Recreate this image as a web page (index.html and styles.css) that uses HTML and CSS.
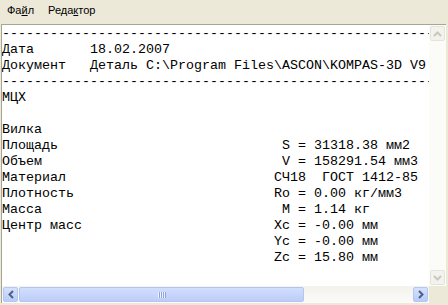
FILE: index.html
```
<!DOCTYPE html>
<html lang="ru">
<head>
  <meta charset="UTF-8">
  <title>МЦХ</title>
  <link rel="stylesheet" href="styles.css">
</head>
<body>

  <div class="menubar">
    <span class="menu-item">Фа<u>й</u>л</span>
    <span class="menu-item">Реда<u>к</u>тор</span>
  </div>

  <div class="window">
    <div class="view">
      <div class="text-area">
<pre class="report">--------------------------------------------------------------------------------
Дата       18.02.2007
Документ   Деталь C:\Program Files\ASCON\KOMPAS-3D V9
--------------------------------------------------------------------------------
МЦХ

Вилка
Площадь                            S = 31318.38 мм2
Объем                              V = 158291.54 мм3
Материал                          СЧ18  ГОСТ 1412-85
Плотность                         Ro = 0.00 кг/мм3
Масса                              M = 1.14 кг
Центр масс                        Xc = -0.00 мм
                                  Yc = -0.00 мм
                                  Zc = 15.80 мм</pre>
      </div>
      <div class="vscroll">
        <div class="sb-btn disabled">
          <svg width="9" height="6"><polyline points="1,5 4.5,1.5 8,5" fill="none" stroke="#c9c8bd" stroke-width="2"/></svg>
        </div>
        <div class="sb-track"></div>
        <div class="sb-btn disabled">
          <svg width="9" height="6"><polyline points="1,1 4.5,4.5 8,1" fill="none" stroke="#c9c8bd" stroke-width="2"/></svg>
        </div>
      </div>
    </div>
    <div class="hscroll-row">
      <div class="hscroll">
        <div class="sb-btn">
          <svg width="6" height="9"><polyline points="5,1 1.5,4.5 5,8" fill="none" stroke="#4d6185" stroke-width="2"/></svg>
        </div>
        <div class="sb-track">
          <div class="thumb"><span class="grip"></span></div>
        </div>
        <div class="sb-btn">
          <svg width="6" height="9"><polyline points="1,1 4.5,4.5 1,8" fill="none" stroke="#4d6185" stroke-width="2"/></svg>
        </div>
      </div>
      <div class="corner"></div>
    </div>
  </div>

</body>
</html>
```

FILE: styles.css
```
body {
  margin: 0;
  width: 448px;
  height: 305px;
  overflow: hidden;
  background-color: #ece9d8;
  font-family: "Liberation Sans", Arial, sans-serif;
  font-size: 11px;
  color: #000;
}

.menubar {
  display: flex;
  align-items: center;
  height: 24px;
}

.menu-item {
  padding: 0 7px;
  line-height: 17px;
  margin-top: -3px;
}

.window {
  margin-left: 1px;
  width: 444px;
  height: 278px;
  border-left: 1px solid #a7a596;
  border-top: 1px solid #a7a596;
  display: flex;
  flex-direction: column;
}

.view {
  display: flex;
  height: 261px;
  background: #fff;
}

.text-area {
  width: 427px;
  overflow: hidden;
}

.report {
  margin: 0;
  padding-top: 1px;
  font-family: "Liberation Mono", "Courier New", monospace;
  font-size: 13.333px;
  line-height: 16px;
  white-space: pre;
}

.vscroll {
  width: 17px;
  display: flex;
  flex-direction: column;
  background: #fbfbf8;
}

.vscroll .sb-track {
  flex: 1;
}

.sb-btn {
  width: 13px;
  height: 13px;
  margin: 1px;
  border: 1px solid #b4c6f4;
  border-radius: 2px;
  background: linear-gradient(to bottom, #d5e1fe, #b8cbf9);
  display: flex;
  align-items: center;
  justify-content: center;
}

.sb-btn.disabled {
  border-color: #e5e4dc;
  background: #f3f2ec;
}

.hscroll-row {
  display: flex;
  height: 17px;
}

.hscroll {
  width: 427px;
  display: flex;
  background: linear-gradient(to bottom, #f3f2ed, #fbfbf8);
}

.hscroll .sb-track {
  flex: 1;
  display: flex;
}

.thumb {
  width: 283px;
  height: 13px;
  margin: 1px 0;
  border: 1px solid #b3c5f3;
  border-radius: 2px;
  background: linear-gradient(to bottom, #d2defd, #bccdf9);
  display: flex;
  align-items: center;
  justify-content: center;
}

.grip {
  width: 8px;
  height: 6px;
  background: repeating-linear-gradient(to right, #eef3fe 0 1px, #8ca3de 1px 2px);
}

.corner {
  width: 17px;
  background-color: #ece9d8;
}
```
